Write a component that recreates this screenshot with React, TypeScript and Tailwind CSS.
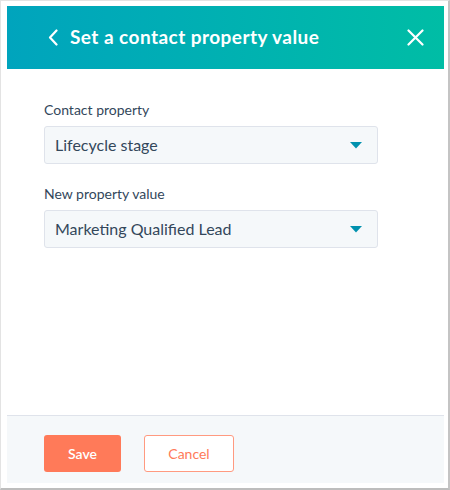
import React from 'react';

const fields = [
  { label: 'Contact property', value: 'Lifecycle stage' },
  { label: 'New property value', value: 'Marketing Qualified Lead' },
];

const Caret = () => (
  <svg width="12" height="7" viewBox="0 0 12 7" className="shrink-0">
    <path d="M0 0h12L6 6.5z" fill="#0091ae" />
  </svg>
);

export default function App() {
  return (
    <div
      className="w-[450px] h-[490px] bg-white border-l border-t border-r-2 border-b-2 border-l-[#e3e3e3] border-t-[#e3e3e3] border-r-[#c4c4c4] border-b-[#bdbdbd] pl-[6px] pt-[5px] pr-[4px] pb-[5px]"
      style={{ fontFamily: 'Lato, "Open Sans", sans-serif' }}
    >
      <div className="flex h-full flex-col">
        {/* header */}
        <div className="flex h-[63px] shrink-0 items-center justify-between bg-gradient-to-r from-[#00a4bd] to-[#00bda5] pl-[41px] pr-[20px] text-white">
          <div className="flex items-center gap-[12px]">
            <svg width="10" height="17" viewBox="0 0 10 17" fill="none">
              <path d="M8.5 1.5L2 8.5l6.5 7" stroke="white" strokeWidth="2.2" strokeLinecap="round" strokeLinejoin="round" />
            </svg>
            <span className="text-[19px] font-bold tracking-[0.45px]">Set a contact property value</span>
          </div>
          <svg width="17" height="17" viewBox="0 0 17 17" fill="none">
            <path d="M1.5 1.5l14 14M15.5 1.5l-14 14" stroke="white" strokeWidth="2.2" strokeLinecap="round" />
          </svg>
        </div>

        {/* body */}
        <div className="flex-1 px-[37px] pt-[31px]">
          {fields.map((f) => (
            <div key={f.label} className="mb-[20px]">
              <div className="mb-[6px] text-[14px] leading-[20px] text-[#33475b]">{f.label}</div>
              <div className="flex h-[38px] w-[334px] items-center justify-between rounded-[3px] border border-[#dfe3eb] bg-[#f5f8fa] pl-[10px] pr-[15px]">
                <span className="text-[16px] text-[#33475b]">{f.value}</span>
                <Caret />
              </div>
            </div>
          ))}
        </div>

        {/* footer */}
        <div className="flex h-[68px] shrink-0 items-start gap-[23px] border-t border-[#dfe3eb] bg-[#f5f8fa] pl-[37px] pt-[19px]">
          <button className="h-[37px] w-[77px] rounded-[3px] bg-[#ff7a59] text-[14px] font-semibold text-white">
            Save
          </button>
          <button className="h-[37px] w-[90px] rounded-[3px] border border-[#ff9a80] bg-white text-[14px] text-[#ff7a59]">
            Cancel
          </button>
        </div>
      </div>
    </div>
  );
}
